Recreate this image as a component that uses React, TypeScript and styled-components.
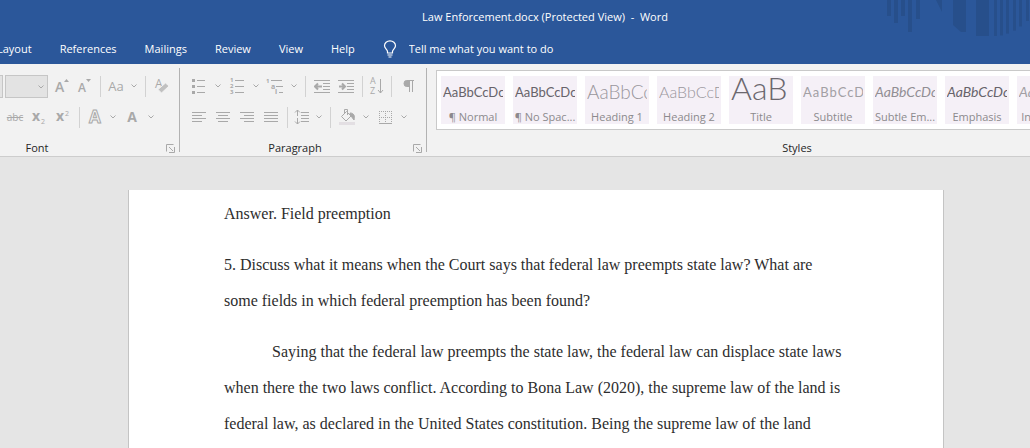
import React from "react";
import styled, { createGlobalStyle, css } from "styled-components";

const ink = "#a9a9a9";
const uiFont = '"Open Sans", "Noto Sans", sans-serif';

const GlobalStyle = createGlobalStyle`
  *, *::before, *::after { box-sizing: border-box; }
  body { margin: 0; background: #e5e5e5; font-family: ${uiFont}; font-size: 11px; }
  button, select, input { font: inherit; color: inherit; margin: 0; }
`;

const AppShell = styled.div`
  display: flex;
  flex-direction: column;
  min-height: 100vh;
  overflow: hidden;
`;

const Header = styled.header`
  position: relative;
  background: #2b579a;
  color: #fff;
`;

const HeaderArt = styled.svg`
  position: absolute;
  top: 0;
  right: 0;
  width: 150px;
  height: 40px;
`;

const TitleBar = styled.div`
  display: flex;
  align-items: center;
  justify-content: center;
  height: 32px;
  padding-left: 60px;
  white-space: pre;
`;

const TabBar = styled.nav`
  display: flex;
  align-items: center;
  height: 32px;
  gap: 28px;
  padding-top: 2px;
  margin-left: -3px;
`;

const Tab = styled.button`
  padding: 0;
  border: 0;
  background: none;
  line-height: 16px;
  white-space: nowrap;
`;

const TellMe = styled.label`
  display: flex;
  align-items: center;
  flex: 1;
  gap: 12px;
`;

const TellMeInput = styled.input`
  flex: 1;
  min-width: 0;
  padding: 0;
  border: 0;
  outline: 0;
  background: none;
  line-height: 16px;
  &::placeholder { color: #fff; opacity: 1; }
`;

const Ribbon = styled.div`
  display: flex;
  background: #f2f2f2;
  border-bottom: 1px solid #cdcdcd;
  margin-left: -89px;
`;

const Group = styled.section<{ $width: number }>`
  display: flex;
  flex-direction: column;
  flex: 0 0 ${(p) => p.$width}px;
  min-width: 0;
  min-height: 92px;
  padding-top: 10px;
`;

const GroupDivider = styled.div`
  flex: none;
  width: 1px;
  margin: 4px 0;
  background: #b2b2b2;
`;

const ToolRow = styled.div<{ $end?: number }>`
  display: flex;
  align-items: center;
  height: 24px;
  margin-bottom: 7px;
  padding-left: 7px;
  padding-right: ${(p) => p.$end ?? 0}px;
  justify-content: ${(p) => (p.$end ? "flex-end" : "flex-start")};
`;

const GroupFooter = styled.div`
  display: flex;
  align-items: center;
  height: 16px;
  margin-top: auto;
  padding-right: 2px;
`;

const GroupLabel = styled.h2`
  flex: 1;
  margin: 0;
  font-size: 11px;
  font-weight: 400;
  line-height: 16px;
  text-align: center;
  color: #262626;
`;

const Tool = styled.button<{ $width?: number }>`
  display: flex;
  align-items: center;
  justify-content: center;
  flex: none;
  width: ${(p) => p.$width ?? 24}px;
  height: 24px;
  padding: 0;
  border: 0;
  background: none;
  color: ${ink};
`;

const Separator = styled.span`
  flex: none;
  width: 1px;
  height: 21px;
  margin: 0 4px;
  background: #d2d2d2;
`;

const Picker = styled.select<{ $width: number }>`
  appearance: none;
  flex: none;
  width: ${(p) => p.$width}px;
  height: 23px;
  margin-right: 2px;
  border: 1px solid #c6c6c6;
  border-radius: 0;
  background: #e3e3e3;
  opacity: 1;
`;

const PickerBox = styled.span`
  position: relative;
  display: flex;
  flex: none;
  svg { position: absolute; right: 6px; top: 10px; }
`;

const Letters = styled.span<{ $size: number; $bold?: boolean; $strike?: boolean }>`
  font-size: ${(p) => p.$size}px;
  font-weight: ${(p) => (p.$bold ? 700 : 400)};
  line-height: 20px;
  text-decoration: ${(p) => (p.$strike ? "line-through" : "none")};
`;

const Gallery = styled.div`
  display: flex;
  gap: 8px;
  height: 60px;
  margin: -4px 0 0 9px;
  padding: 5px 4px;
  border: 1px solid #c9c9c9;
  background: #fff;
`;

const StyleCard = styled.button`
  display: flex;
  flex-direction: column;
  flex: 0 0 64px;
  height: 48px;
  padding: 0;
  border: 0;
  background: #f5f0f7;
`;

type SampleLook = { size: number; color: string; light?: boolean; italic?: boolean; spaced?: boolean; tall?: boolean };

const Sample = styled.span<{ $look: SampleLook }>`
  flex: none;
  width: 60px;
  height: 31px;
  margin: 0 2px;
  overflow: hidden;
  white-space: nowrap;
  text-align: left;
  line-height: ${(p) => (p.$look.tall ? 24 : 32)}px;
  font-family: Lato, "Open Sans", sans-serif;
  font-size: ${(p) => p.$look.size}px;
  color: ${(p) => p.$look.color};
  ${(p) => p.$look.light && css`font-weight: 300;`}
  ${(p) => p.$look.italic && css`font-style: italic;`}
  ${(p) => p.$look.spaced && css`letter-spacing: 1px;`}
`;

const StyleName = styled.span`
  flex: none;
  width: 64px;
  font-size: 11px;
  line-height: 20px;
  text-align: center;
  white-space: nowrap;
  color: #8c8a8d;
`;

const Workspace = styled.main`
  display: flex;
  flex: 1;
  padding: 33px 86px 0 128px;
  background: #e5e5e5;
`;

const Page = styled.article`
  flex: 1;
  max-width: 816px;
  padding: 6px 95px;
  border: solid #c4c4c4;
  border-width: 0 1px;
  background: #fff;
`;

const Paragraph = styled.p<{ $indent?: boolean }>`
  margin: 0 0 15px;
  font-family: "Liberation Serif", "Times New Roman", serif;
  font-size: 16px;
  line-height: 36px;
  color: #2d2d2d;
  text-indent: ${(p) => (p.$indent ? 48 : 0)}px;
  &:last-child { margin-bottom: 0; }
`;

const Chevron = () => (
  <svg width="6" height="4" viewBox="0 0 6 4" fill="none" stroke={ink}>
    <path d="M.5 .5 3 3 5.5 .5" />
  </svg>
);

const Drop = ({ label }: { label: string }) => (
  <Tool $width={14} aria-label={label}>
    <Chevron />
  </Tool>
);

const Icon = ({ children, w = 16, h = 16 }: { children: React.ReactNode; w?: number; h?: number }) => (
  <svg width={w} height={h} viewBox={`0 0 ${w} ${h}`} fill="none" stroke={ink} aria-hidden="true">
    {children}
  </svg>
);

const glyph = { fill: ink, stroke: "none", fontFamily: "Open Sans, sans-serif" } as const;

const Launcher = ({ label }: { label: string }) => (
  <Tool $width={14} aria-label={label}>
    <Icon w={9} h={9}>
      <path d="M.5 7.500V.5H7.500M3 3 7 7M8.500 3V8.500H3" />
    </Icon>
  </Tool>
);

const Lines = ({ rows }: { rows: [number, number][] }) => (
  <Icon>
    {rows.map(([a, b], i) => (
      <path key={i} d={`M${a} ${3.5 + i * 3}H${b}`} />
    ))}
  </Icon>
);

const GrowFont = ({ down }: { down?: boolean }) => (
  <Icon w={16} h={18}>
    <text x="1" y="15" {...glyph} fontSize={down ? 12 : 14} fontWeight="600">A</text>
    <path d={down ? "M9 2H14L11.500 5Z" : "M10 5H15L12.500 2Z"} fill={ink} stroke="none" />
  </Icon>
);

const Indent = ({ right }: { right?: boolean }) => (
  <Icon>
    <path d="M0 2.500H16M9 5.500H16M9 8.500H16M9 11.500H16M0 14.500H16" />
    <path d={right ? "M1 8.500H6M4 5.500 7 8.500 4 11.500" : "M2 8.500H8M4 5.500 1 8.500 4 11.500"} strokeWidth="2" />
  </Icon>
);

const styles: { name: string; sample: string; look: SampleLook }[] = [
  { name: "¶ Normal", sample: "AaBbCcDc", look: { size: 13, color: "#67636a" } },
  { name: "¶ No Spac...", sample: "AaBbCcDc", look: { size: 13, color: "#67636a" } },
  { name: "Heading 1", sample: "AaBbCc", look: { size: 19, color: "#99969c", light: true } },
  { name: "Heading 2", sample: "AaBbCcD", look: { size: 16, color: "#99969c", light: true } },
  { name: "Title", sample: "AaB", look: { size: 32, color: "#6b676e", light: true, tall: true } },
  { name: "Subtitle", sample: "AaBbCcD", look: { size: 13, color: "#a29fa4", spaced: true } },
  { name: "Subtle Em...", sample: "AaBbCcDc", look: { size: 14, color: "#918e94", italic: true } },
  { name: "Emphasis", sample: "AaBbCcDc", look: { size: 14, color: "#67636a", italic: true } },
  { name: "Intense E...", sample: "AaBbCcDc", look: { size: 14, color: "#a29fa4", italic: true } },
];

const stripes = [994, 1000, 1006, 1013, 1019, 1026];

export default function App() {
  return (
    <AppShell>
      <GlobalStyle />
      <Header>
        <HeaderArt viewBox="880 0 150 40" fill="#274f8b" aria-hidden="true">
          <path d="M887 0h4v16h-4zM894 0h4v23h-4zM901 0h4v16h-4zM908 0h4v32h-4zM916 0h4v19h-4z" />
          <path d="M936 0h6v12zM953 0h13v32h-5l-8-7zM976 0h13v36h-13z" />
          {stripes.map((x, i) => (
            <rect key={x} x={x} y="0" width="3" height={36 - i * i * 0.6} />
          ))}
        </HeaderArt>
        <TitleBar>{"Law Enforcement.docx (Protected View)  -  Word"}</TitleBar>
        <TabBar>
          {["Layout", "References", "Mailings", "Review", "View", "Help"].map((t) => (
            <Tab key={t}>{t}</Tab>
          ))}
          <TellMe>
            <svg width="14" height="18" viewBox="0 0 14 18" fill="none" stroke="#fff" strokeWidth="1.2" aria-hidden="true">
              <path d="M4.500 13V11.500C4.500 9.500 1.500 8.500 1.500 5.800a5.500 5 0 0 1 11 0C12.500 8.500 9.500 9.500 9.500 11.500V13ZM4.500 15H9.500M5.500 17H8.500" />
            </svg>
            <TellMeInput aria-label="Tell me" placeholder="Tell me what you want to do" />
          </TellMe>
        </TabBar>
      </Header>

      <Ribbon>
        <Group $width={268}>
          <ToolRow $end={5}>
            <Picker $width={72} aria-label="Font name" disabled />
            <PickerBox>
              <Picker $width={43} aria-label="Font size" disabled />
              <Chevron />
            </PickerBox>
            <Tool aria-label="Increase font size"><GrowFont /></Tool>
            <Tool $width={22} aria-label="Decrease font size"><GrowFont down /></Tool>
            <Separator />
            <Tool $width={22} aria-label="Change case"><Letters $size={13}>Aa</Letters></Tool>
            <Drop label="Case options" />
            <Separator />
            <Tool aria-label="Clear formatting">
              <Icon>
                <text x="1" y="10" {...glyph} fontSize="12">A</text>
                <path d="M4 11.500 11.500 5 15 8 7.500 15Z" fill="#c0c0c0" stroke="#f2f2f2" />
              </Icon>
            </Tool>
          </ToolRow>
          <ToolRow $end={21}>
            <Tool aria-label="Strikethrough"><Letters $size={10} $strike>abc</Letters></Tool>
            <Tool aria-label="Subscript">
              <Icon><text x="1" y="12" {...glyph} fontSize="14" fontWeight="700">x</text><text x="10" y="15" {...glyph} fontSize="7">2</text></Icon>
            </Tool>
            <Tool aria-label="Superscript">
              <Icon><text x="1" y="12" {...glyph} fontSize="14" fontWeight="700">x</text><text x="10" y="7" {...glyph} fontSize="7">2</text></Icon>
            </Tool>
            <Separator />
            <Tool $width={22} aria-label="Text effects">
              <Icon><text x="2" y="14" {...glyph} fill="#f2f2f2" stroke={ink} fontSize="17" fontWeight="700">A</text></Icon>
            </Tool>
            <Drop label="Text effect options" />
            <Tool aria-label="Font color"><Letters $size={14} $bold>A</Letters></Tool>
            <Drop label="Font color options" />
          </ToolRow>
          <GroupFooter>
            <GroupLabel>Font</GroupLabel>
            <Launcher label="Font settings" />
          </GroupFooter>
        </Group>
        <GroupDivider />
        <Group $width={246}>
          <ToolRow>
            <Tool aria-label="Bullets">
              <Icon>
                <path d="M6 2.500H14M6 8.500H14M6 14.500H14" />
                <path d="M1 1h3v3h-3zM1 7h3v3h-3zM1 13h3v3h-3z" fill={ink} stroke="none" />
              </Icon>
            </Tool>
            <Drop label="Bullet options" />
            <Tool aria-label="Numbering">
              <Icon w={16} h={18}>
                <path d="M6 3.500H15M6 9.500H15M6 15.500H15" />
                <text x="1" y="5" {...glyph} fontSize="6" fontWeight="700">1</text>
                <text x="1" y="11" {...glyph} fontSize="6" fontWeight="700">2</text>
                <text x="1" y="17" {...glyph} fontSize="6" fontWeight="700">3</text>
              </Icon>
            </Tool>
            <Drop label="Numbering options" />
            <Tool aria-label="Multilevel list">
              <Icon w={18}>
                <path d="M5 2.500H16M10 8.500H17M13 14.500H17" />
                <text x="0" y="5" {...glyph} fontSize="6" fontWeight="700">1</text>
                <text x="5" y="11" {...glyph} fontSize="7" fontWeight="700">a</text>
                <text x="9" y="16" {...glyph} fontSize="7" fontWeight="700">i</text>
              </Icon>
            </Tool>
            <Drop label="Multilevel options" />
            <Separator />
            <Tool aria-label="Decrease indent"><Indent /></Tool>
            <Tool aria-label="Increase indent"><Indent right /></Tool>
            <Separator />
            <Tool $width={20} aria-label="Sort">
              <Icon w={16} h={18}>
                <text x="1" y="7" {...glyph} fontSize="9">A</text>
                <text x="1" y="17" {...glyph} fontSize="9">Z</text>
                <path d="M11.500 2V16M9 13 11.500 16 14 13" />
              </Icon>
            </Tool>
            <Separator />
            <Tool aria-label="Show marks">
              <Icon><path d="M7 2.500H14M9.500 2.500V14M12.500 2.500V14" /><path d="M9 2.500H6.500a2.500 3 0 0 0 0 6H9Z" fill={ink} /></Icon>
            </Tool>
          </ToolRow>
          <ToolRow>
            <Tool aria-label="Align left"><Lines rows={[[1, 15], [1, 11], [1, 15], [1, 11]]} /></Tool>
            <Tool aria-label="Center"><Lines rows={[[1, 15], [3, 13], [1, 15], [3, 13]]} /></Tool>
            <Tool aria-label="Align right"><Lines rows={[[1, 15], [5, 15], [1, 15], [5, 15]]} /></Tool>
            <Tool aria-label="Justify"><Lines rows={[[1, 15], [1, 15], [1, 15], [1, 15]]} /></Tool>
            <Separator />
            <Tool $width={20} aria-label="Line spacing">
              <Icon><path d="M3.500 1V7M1 3.500 3.500 1 6 3.500M3.500 9V15M1 12.500 3.500 15 6 12.500M7 3.500H15M7 6.500H15M7 9.500H15M7 12.500H15" /></Icon>
            </Tool>
            <Drop label="Line spacing options" />
            <Separator />
            <Tool aria-label="Shading">
              <Icon w={18} h={18}>
                <path d="M1 14h16v3h-16z" fill="#e3dfe3" stroke="none" />
                <path d="M8.500 3.500 13 8 8 13 3.500 8.500ZM6.500 6V1.500h3V7" />
                <path d="M12 5c4 0 5 3 4 7l-3-4z" fill={ink} />
              </Icon>
            </Tool>
            <Drop label="Shading options" />
            <Tool aria-label="Borders">
              <Icon><path d="M2 2.500H15M2 8.500H15M2.500 2V14M8.500 2V14M14.500 2V14" strokeDasharray="1 1" /><path d="M2 14.500H15" /></Icon>
            </Tool>
            <Drop label="Border options" />
          </ToolRow>
          <GroupFooter>
            <GroupLabel>Paragraph</GroupLabel>
            <Launcher label="Paragraph settings" />
          </GroupFooter>
        </Group>
        <GroupDivider />
        <Group $width={756}>
          <Gallery>
            {styles.map((s) => (
              <StyleCard key={s.name}>
                <Sample $look={s.look}>{s.sample}</Sample>
                <StyleName>{s.name}</StyleName>
              </StyleCard>
            ))}
          </Gallery>
          <GroupFooter>
            <GroupLabel>Styles</GroupLabel>
            <Launcher label="Style settings" />
          </GroupFooter>
        </Group>
      </Ribbon>

      <Workspace>
        <Page>
          <Paragraph>Answer. Field preemption</Paragraph>
          <Paragraph>
            5. Discuss what it means when the Court says that federal law preempts state law? What are
            some fields in which federal preemption has been found?
          </Paragraph>
          <Paragraph $indent>
            Saying that the federal law preempts the state law, the federal law can displace state laws
            when there the two laws conflict. According to Bona Law (2020), the supreme law of the land is
            federal law, as declared in the United States constitution. Being the supreme law of the land
          </Paragraph>
        </Page>
      </Workspace>
    </AppShell>
  );
}
